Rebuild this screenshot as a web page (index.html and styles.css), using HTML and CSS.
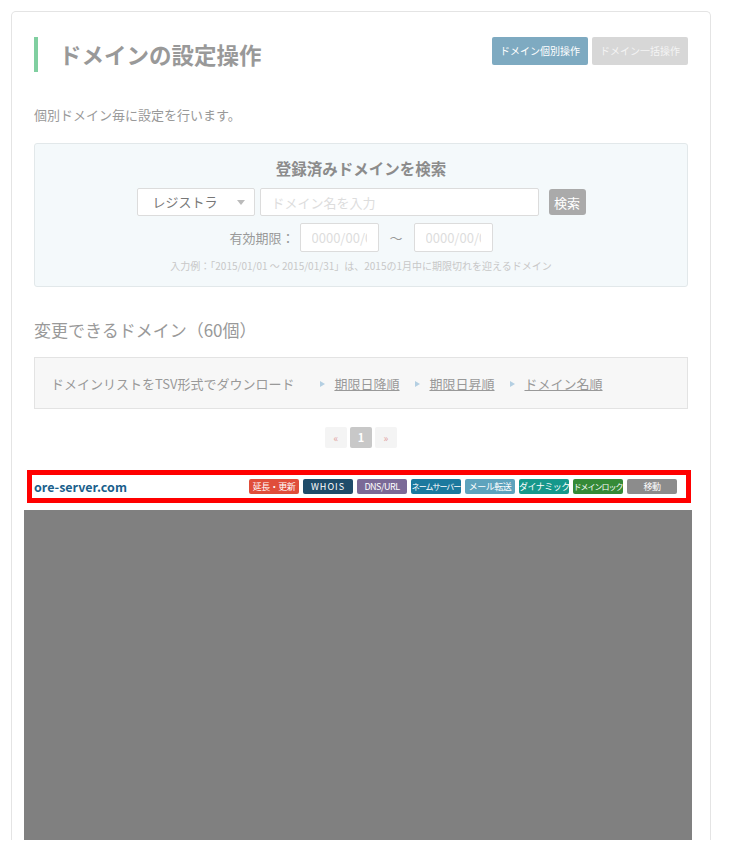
FILE: index.html
```html
<!DOCTYPE html>
<html lang="ja">
<head>
    <meta charset="UTF-8">
    <meta name="viewport" content="width=device-width, initial-scale=1.0">
    <title>ドメインの設定操作</title>
    <link rel="stylesheet" href="styles.css">
</head>
<body>
    <div class="card">
        <div class="page-head">
            <h1 class="page-title">ドメインの設定操作</h1>
            <div class="mode-tabs">
                <a class="tab tab-active" href="#">ドメイン個別操作</a>
                <a class="tab" href="#">ドメイン一括操作</a>
            </div>
        </div>

        <p class="lead">個別ドメイン毎に設定を行います。</p>

        <div class="search-box">
            <h2 class="search-title">登録済みドメインを検索</h2>
            <div class="search-row">
                <div class="select">レジストラ<span class="caret"></span></div>
                <input class="text-input name-input" type="text" placeholder="ドメイン名を入力">
                <button class="btn-search">検索</button>
            </div>
            <div class="search-row date-row">
                <span class="date-label">有効期限：</span>
                <input class="text-input date-input" type="text" placeholder="0000/00/00">
                <span class="tilde">～</span>
                <input class="text-input date-input" type="text" placeholder="0000/00/00">
            </div>
            <p class="hint">入力例：「2015/01/01 ～ 2015/01/31」は、2015の1月中に期限切れを迎えるドメイン</p>
        </div>

        <h2 class="list-title">変更できるドメイン（60個）</h2>

        <div class="tsv-box">
            <span class="tsv-label">ドメインリストをTSV形式でダウンロード</span>
            <a class="sort-link" href="#">期限日降順</a>
            <a class="sort-link" href="#">期限日昇順</a>
            <a class="sort-link" href="#">ドメイン名順</a>
        </div>

        <ul class="pager">
            <li class="page-arrow">&laquo;</li>
            <li class="page-current">1</li>
            <li class="page-arrow">&raquo;</li>
        </ul>

        <div class="domain-row">
            <a class="domain-name" href="#">ore-server.com</a>
            <div class="badges">
                <span class="badge b-renew">延長・更新</span>
                <span class="badge b-whois">WHOIS</span>
                <span class="badge b-dns">DNS/URL</span>
                <span class="badge b-ns">ネームサーバー</span>
                <span class="badge b-mail">メール転送</span>
                <span class="badge b-dyn">ダイナミック</span>
                <span class="badge b-lock">ドメインロック</span>
                <span class="badge b-move">移動</span>
            </div>
        </div>

        <div class="domain-detail"></div>
    </div>
</body>
</html>
```

FILE: styles.css
```css
* {
    margin: 0;
    padding: 0;
    box-sizing: border-box;
}

html, body {
    font-family: "Noto Sans CJK JP", "Noto Sans", sans-serif;
    color: #999;
    background: #fff;
    overflow: hidden;
}

.card {
    width: 700px;
    height: 829px;
    margin: 11px 0 0 11px;
    padding: 25px 22px 0;
    border: 1px solid #e4e4e4;
    border-bottom: none;
    border-radius: 5px 5px 0 0;
}

.page-head {
    display: flex;
    justify-content: space-between;
    align-items: flex-start;
}

.page-title {
    height: 35px;
    line-height: 35px;
    padding-left: 21px;
    border-left: 4px solid #80cfa0;
    font-size: 22.5px;
    font-weight: 700;
    color: #999;
}

.mode-tabs {
    display: flex;
    gap: 4px;
}

.tab {
    display: block;
    width: 96px;
    height: 28px;
    line-height: 28px;
    text-align: center;
    font-size: 10px;
    color: #f4f4f4;
    background: #d7d7d7;
    border-radius: 2px;
    text-decoration: none;
}

.tab-active {
    background: #7eaac1;
    color: #fff;
}

.lead {
    margin-top: 33px;
    line-height: 20px;
    font-size: 13px;
}

.search-box {
    margin-top: 18px;
    padding: 12px 0 13px;
    background: #f4f9fb;
    border: 1px solid #e2e8ea;
    border-radius: 3px;
    text-align: center;
}

.search-title {
    line-height: 24px;
    font-size: 15.5px;
    font-weight: 700;
    color: #8c8c8c;
}

.search-row {
    display: flex;
    justify-content: center;
    align-items: center;
    margin-top: 8px;
}

.select {
    position: relative;
    width: 118px;
    height: 28px;
    line-height: 26px;
    padding-left: 15px;
    text-align: left;
    font-size: 13px;
    color: #777;
    background: #fff;
    border: 1px solid #dcdcdc;
    border-radius: 2px;
}

.caret {
    position: absolute;
    right: 9px;
    top: 11px;
    border-left: 4px solid transparent;
    border-right: 4px solid transparent;
    border-top: 5px solid #bbb;
}

.text-input {
    height: 28px;
    padding: 0 11px;
    font-family: inherit;
    font-size: 13px;
    color: #777;
    background: #fff;
    border: 1px solid #dcdcdc;
    border-radius: 2px;
    outline: none;
}

.text-input::placeholder {
    color: #ddd;
}

.name-input {
    width: 279px;
    margin-left: 5px;
}

.btn-search {
    width: 37px;
    height: 26px;
    margin-left: 10px;
    font-family: inherit;
    font-size: 13px;
    color: #fff;
    background: #aaa;
    border: none;
    border-radius: 3px;
}

.date-row {
    margin-top: 7px;
}

.date-label {
    font-size: 13px;
    color: #999;
    margin-right: 5px;
}

.date-input {
    width: 79px;
    height: 29px;
}

.tilde {
    width: 35px;
    font-size: 13px;
    color: #999;
}

.hint {
    margin-top: 7px;
    line-height: 14px;
    font-size: 10px;
    color: #c8c8c8;
}

.list-title {
    margin-top: 31px;
    line-height: 24px;
    font-size: 17px;
    font-weight: 400;
    color: #999;
}

.tsv-box {
    display: flex;
    align-items: center;
    height: 52px;
    margin-top: 15px;
    padding-left: 16px;
    background: #f7f7f7;
    border: 1px solid #e3e3e3;
    font-size: 13px;
}

.tsv-label {
    margin-right: 26px;
}

.sort-link {
    position: relative;
    margin-right: 16px;
    padding-left: 14px;
    color: #999;
}

.sort-link::before {
    content: "";
    position: absolute;
    left: 0;
    top: 7px;
    border-top: 3.5px solid transparent;
    border-bottom: 3.5px solid transparent;
    border-left: 5px solid #b4cfe2;
}

.pager {
    display: flex;
    justify-content: center;
    gap: 3px;
    margin-top: 18px;
    list-style: none;
}

.pager li {
    width: 22px;
    height: 21px;
    line-height: 21px;
    text-align: center;
    font-size: 10px;
    border-radius: 2px;
}

.page-arrow {
    color: #e2a4a4;
    background: #f4f4f4;
}

.page-current {
    color: #fff;
    font-weight: 700;
    font-size: 11px !important;
    background: #c8c8c8;
}

.domain-row {
    display: flex;
    justify-content: space-between;
    align-items: center;
    width: 664px;
    height: 33px;
    margin: 22px 0 0 -7px;
    padding: 0 9px 0 2px;
    border: 5px solid #f00;
}

.domain-name {
    font-size: 12.5px;
    font-weight: 700;
    color: #1b5f8c;
    text-decoration: none;
}

.badges {
    display: flex;
    gap: 4px;
}

.badge {
    width: 50px;
    height: 15px;
    line-height: 15px;
    text-align: center;
    font-size: 9px;
    color: #fff;
    border-radius: 2px;
    white-space: nowrap;
    letter-spacing: -0.5px;
}

.b-renew { background: #e04d3a; }
.b-whois { background: #1f4c6a; letter-spacing: 1px; }
.b-dns { background: #7b6a97; }
.b-ns { background: #1b799e; font-size: 8px; letter-spacing: -1px; }
.b-mail { background: #5ea3bd; }
.b-dyn { background: #16988b; }
.b-lock { background: #358a37; font-size: 8px; letter-spacing: -1px; }
.b-move { background: #8c8c8c; }

.domain-detail {
    width: 668px;
    height: 333px;
    margin: 7px 0 0 -10px;
    background: #808080;
}
```
